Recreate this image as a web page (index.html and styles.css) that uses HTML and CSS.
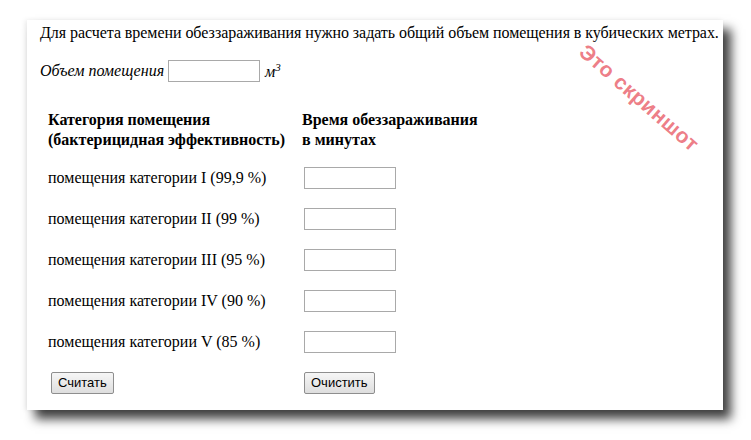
FILE: index.html
```html
<!DOCTYPE html>
<html lang="ru">
<head>
    <meta charset="UTF-8">
    <title>Время обеззараживания</title>
    <link rel="stylesheet" href="styles.css">
</head>
<body>
    <div class="panel">
        <p class="intro">Для расчета времени обеззараживания нужно задать общий объем помещения в кубических метрах.</p>

        <div class="volume">
            <label for="volume">Объем помещения</label>
            <input type="text" id="volume">
            <span class="unit">м<sup>3</sup></span>
        </div>

        <table class="calc">
            <tr class="head">
                <th>Категория помещения<br>(бактерицидная эффективность)</th>
                <th>Время обеззараживания<br>в минутах</th>
            </tr>
            <tr>
                <td>помещения категории I (99,9 %)</td>
                <td><input type="text" id="cat1"></td>
            </tr>
            <tr>
                <td>помещения категории II (99 %)</td>
                <td><input type="text" id="cat2"></td>
            </tr>
            <tr>
                <td>помещения категории III (95 %)</td>
                <td><input type="text" id="cat3"></td>
            </tr>
            <tr>
                <td>помещения категории IV (90 %)</td>
                <td><input type="text" id="cat4"></td>
            </tr>
            <tr>
                <td>помещения категории V (85 %)</td>
                <td><input type="text" id="cat5"></td>
            </tr>
            <tr class="buttons">
                <td><button type="button">Считать</button></td>
                <td><button type="button">Очистить</button></td>
            </tr>
        </table>

        <!-- водяной знак -->
        <div class="stamp">Это скриншот</div>
    </div>
</body>
</html>
```

FILE: styles.css
```css
body {
    margin: 0;
    background: #fff;
    font-family: "Liberation Serif", "Times New Roman", serif;
    font-size: 16px;
    color: #000;
}

.panel {
    position: relative;
    box-sizing: border-box;
    width: 696px;
    height: 390px;
    margin: 20px 0 30px 27px;
    padding: 0 0 0 13px;
    background: #fff;
    box-shadow: 8px 9px 10px rgba(0, 0, 0, 0.75), -2px 0 5px rgba(0, 0, 0, 0.08);
}

.intro {
    margin: 0;
    padding-top: 3px;
    line-height: 20px;
    white-space: nowrap;
    letter-spacing: -0.06px;
}

.volume {
    display: flex;
    align-items: center;
    margin-top: 17px;
    height: 22px;
}

.volume label,
.unit {
    font-style: italic;
}

.volume input {
    margin: 0 5px 0 4px;
}

.unit sup {
    font-size: 11px;
    vertical-align: 6px;
}

input[type="text"] {
    box-sizing: border-box;
    width: 92px;
    height: 22px;
    border: 1px solid #a9a9a9;
    padding: 1px 3px;
    font-size: 13px;
}

.calc {
    border-collapse: collapse;
    margin: 28px 0 0 8px;
}

.calc th {
    text-align: left;
    vertical-align: top;
    line-height: 20px;
    padding: 0 0 7px 0;
}

.calc th:first-child,
.calc td:first-child {
    width: 254px;
}

.calc td {
    height: 41px;
    padding: 0;
    line-height: 20px;
}

.calc td input,
.calc td button {
    margin-left: 2px;
}

.calc .buttons td:first-child button {
    margin-left: 3px;
}

button {
    height: 22px;
    padding: 0 6px;
    font-family: "Liberation Sans", Arial, sans-serif;
    font-size: 13px;
    color: #000;
    border: 1px solid #8e8e8e;
    border-radius: 2px;
    background: linear-gradient(#f6f6f6, #dedede);
}

.stamp {
    position: absolute;
    left: 537px;
    top: 66px;
    transform: rotate(41deg);
    font-family: "Liberation Sans", Arial, sans-serif;
    font-size: 21px;
    font-weight: bold;
    letter-spacing: 0.5px;
    color: rgba(228, 60, 75, 0.68);
    white-space: nowrap;
}
```
